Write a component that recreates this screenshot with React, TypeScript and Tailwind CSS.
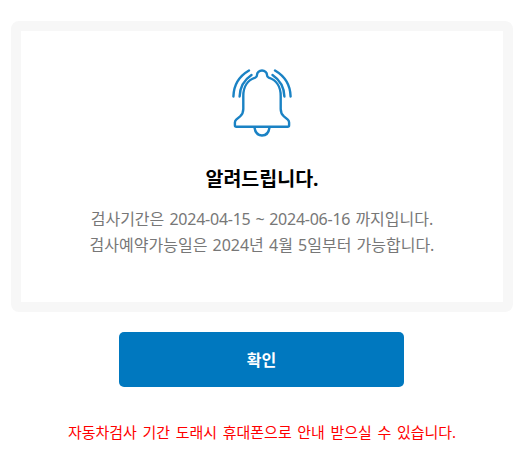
function BellIcon() {
  return (
    <svg width="62" height="70" viewBox="0 0 62 70" fill="none" stroke="#1a82c4" strokeWidth="2.4" strokeLinecap="round" strokeLinejoin="round">
      <path d="M31 1.500c-2.900 0-5 2.100-5 4.500 0 1.300-.5 2.200-1.700 2.700C16.500 11 12.300 18 12.300 27v13c0 3.400-1.100 5.500-3.200 7.400L5.200 50.700c-.9.800-1.300 1.700-1.300 2.900v2.600c0 .9.600 1.500 1.500 1.500h51.200c.9 0 1.500-.6 1.500-1.500v-2.600c0-1.200-.4-2.100-1.300-2.900l-3.900-3.300C50.800 45.500 49.700 43.400 49.700 40V27c0-9-4.200-16-12-18.300-1.200-.5-1.700-1.400-1.700-2.700 0-2.400-2.100-4.500-5-4.500z" />
      <path d="M23.500 58.500c.7 5 3.600 8 7.500 8s6.800-3 7.500-8" />
      <path d="M2.400 27.500C2.700 16 8.500 7 18 1.500" />
      <path d="M8.600 27.500C8.900 18.500 13 11 20.500 6" />
      <path d="M59.600 27.500C59.300 16 53.500 7 44 1.500" />
      <path d="M53.400 27.500C53.100 18.500 49 11 41.500 6" />
    </svg>
  );
}

export default function App() {
  return (
    <div className="w-[520px] h-[453px] bg-white overflow-hidden font-['Noto_Sans','Noto_Sans_CJK_KR',sans-serif]">
      <div className="pt-[21px] pl-[11px] pr-[7px]">
        <div className="h-[291px] border-[10px] border-[#f7f7f7] rounded-[8px] flex flex-col items-center pt-[38px]">
          <BellIcon />
          <h1 className="mt-[27px] text-[19.5px] leading-[26px] font-bold text-black">알려드립니다.</h1>
          <p className="mt-[14px] text-[16px] leading-[26px] text-[#777777] text-center [word-spacing:1px]">
            검사기간은 <span className="tracking-[-0.25px]">2024-04-15 ~ 2024-06-16</span> 까지입니다.
            <br />
            검사예약가능일은 2024년 4월 5일부터 가능합니다.
          </p>
        </div>
      </div>
      <div className="mt-[20px] flex justify-center pl-[3px]">
        <button type="button" className="w-[285px] h-[55px] rounded-[5px] bg-[#0078bf] text-white text-[16px] font-bold">
          확인
        </button>
      </div>
      <p className="mt-[35px] pl-[4px] text-[15px] leading-[20px] text-[#ff0000] text-center [word-spacing:1.7px]">
        자동차검사 기간 도래시 휴대폰으로 안내 받으실 수 있습니다.
      </p>
    </div>
  );
}
